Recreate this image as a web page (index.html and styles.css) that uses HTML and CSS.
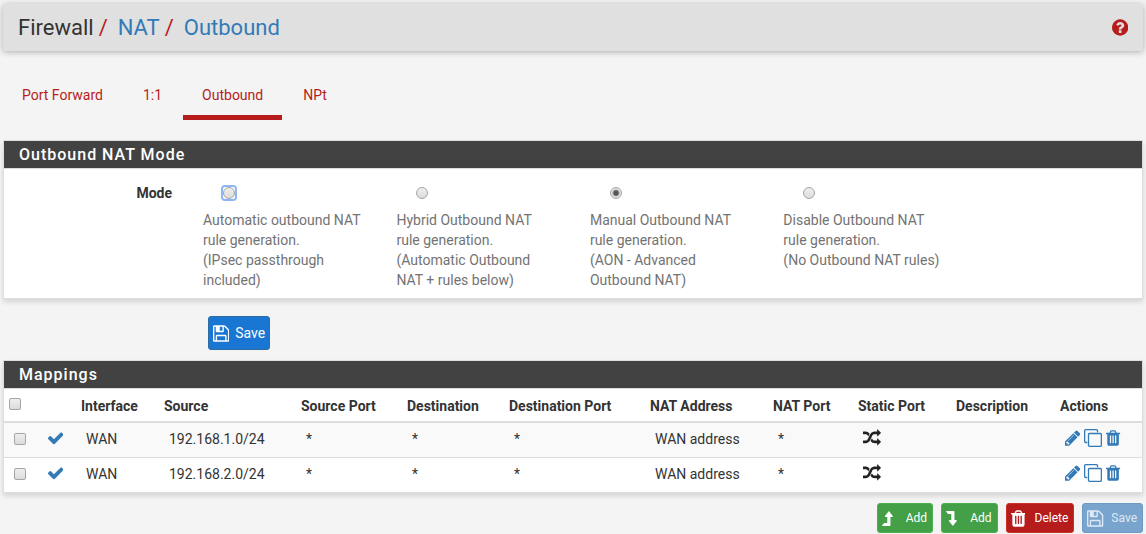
FILE: index.html
```html
<!DOCTYPE html>
<html lang="en">
<head>
  <meta charset="UTF-8" />
  <meta name="viewport" content="width=device-width, initial-scale=1.0" />
  <title>Firewall: NAT: Outbound</title>
  <link rel="stylesheet" href="styles.css">
</head>
<body>
  <svg class="sprite" aria-hidden="true">
    <defs>
      <path id="i-help" d="M1024 1376v-192q0-14-9-23t-23-9h-192q-14 0-23 9t-9 23v192q0 14 9 23t23 9h192q14 0 23-9t9-23zm256-672q0-88-55.5-163t-138.5-116-170-41q-243 0-371 213-15 24 8 42l132 100q7 6 19 6 16 0 25-12 53-68 86-92 34-24 86-24 48 0 85.5 26t37.5 59q0 38-20 61t-68 45q-63 28-115.5 86.5t-52.5 125.5v36q0 14 9 23t23 9h192q14 0 23-9t9-23q0-19 21.5-49.5t54.5-49.5q32-18 49-28.5t46-35 44.5-48 28-60.5 12.5-81zm384 192q0 209-103 385.5t-279.5 279.5-385.5 103-385.5-103-279.5-279.5-103-385.5 103-385.5 279.5-279.5 385.5-103 385.5 103 279.5 279.5 103 385.5z"/>
      <path id="i-check" d="M1671 566q0 40-28 68l-724 724-136 136q-28 28-68 28t-68-28l-136-136-362-362q-28-28-28-68t28-68l136-136q28-28 68-28t68 28l294 295 656-657q28-28 68-28t68 28l136 136q28 28 28 68z"/>
      <path id="i-save" d="M512 1536h768v-384h-768v384zm896 0h128v-896q0-14-10-38.5t-20-34.5l-281-281q-10-10-34-20t-39-10v416q0 40-28 68t-68 28h-576q-40 0-68-28t-28-68v-416h-128v1280h128v-416q0-40 28-68t68-28h832q40 0 68 28t28 68v416zm-384-928v-320q0-13-9.500-22.500t-22.500-9.500h-192q-13 0-22.500 9.500t-9.500 22.500v320q0 13 9.500 22.500t22.500 9.500h192q13 0 22.500-9.500t9.500-22.500zm640 32v928q0 40-28 68t-68 28h-1344q-40 0-68-28t-28-68v-1344q0-40 28-68t68-28h928q40 0 88 20t76 48l280 280q28 28 48 76t20 88z"/>
      <path id="i-trash" d="M704 1376v-704q0-14-9-23t-23-9h-64q-14 0-23 9t-9 23v704q0 14 9 23t23 9h64q14 0 23-9t9-23zm256 0v-704q0-14-9-23t-23-9h-64q-14 0-23 9t-9 23v704q0 14 9 23t23 9h64q14 0 23-9t9-23zm256 0v-704q0-14-9-23t-23-9h-64q-14 0-23 9t-9 23v704q0 14 9 23t23 9h64q14 0 23-9t9-23zm-544-992h448l-48-117q-7-9-17-11h-317q-10 2-17 11zm928 32v64q0 14-9 23t-23 9h-96v948q0 83-47 143.500t-113 60.500h-832q-66 0-113-58.500t-47-141.500v-952h-96q-14 0-23-9t-9-23v-64q0-14 9-23t23-9h309l70-167q15-37 54-63t79-26h320q40 0 79 26t54 63l70 167h309q14 0 23 9t9 23z"/>
      <path id="i-pencil" d="M491 1536l91-91-235-235-91 91v107h128v128h107zm523-928q0-22-22-22-10 0-17 7l-542 542q-7 7-7 17 0 22 22 22 10 0 17-7l542-542q7-7 7-17zm-54-192l416 416-832 832h-416v-416zm683 96q0 53-37 90l-166 166-416-416 166-165q36-38 90-38 53 0 91 38l235 234q37 39 37 91z"/>
      <path id="i-random" d="M666 481q-60 92-137 273-22-45-37-72.500t-40.500-63.500-51-56.500-63-35-81.500-14.500h-224q-14 0-23-9t-9-23v-192q0-14 9-23t23-9h224q250 0 410 225zm1126 799q0 14-9 23l-320 320q-9 9-23 9-13 0-22.500-9.500t-9.500-22.500v-192q-32 0-85 .5t-81 1-73-1-71-5-64-10.500-63-18.500-58-28.500-59-40-55-53.500-56-69.500q59-93 136-273 22 45 37 72.500t40.500 63.500 51 56.500 63 35 81.500 14.500h256v-192q0-14 9-23t23-9q12 0 24 10l319 319q9 9 9 23zm0-896q0 14-9 23l-320 320q-9 9-23 9-13 0-22.500-9.500t-9.500-22.500v-192h-256q-48 0-87 15t-69 45-51 61.500-45 77.500q-32 62-78 171-29 66-49.500 111t-54 105-64 100-74 83-90 68.500-106.500 42-128 16.500h-224q-14 0-23-9t-9-23v-192q0-14 9-23t23-9h224q48 0 87-15t69-45 51-61.500 45-77.500q32-62 78-171 29-66 49.500-111t54-105 64-100 74-83 90-68.500 106.500-42 128-16.500h256v-192q0-14 9-23t23-9q12 0 24 10l319 319q9 9 9 23z"/>
      <path id="i-clone" d="M1664 1632v-1088q0-13-9.500-22.500t-22.500-9.500h-1088q-13 0-22.500 9.500t-9.500 22.500v1088q0 13 9.500 22.500t22.500 9.500h1088q13 0 22.500-9.500t9.500-22.500zm128-1088v1088q0 66-47 113t-113 47h-1088q-66 0-113-47t-47-113v-1088q0-66 47-113t113-47h1088q66 0 113 47t47 113zm-384-384v160h-128v-160q0-13-9.500-22.500t-22.500-9.500h-1088q-13 0-22.500 9.500t-9.500 22.500v1088q0 13 9.500 22.500t22.500 9.500h160v128h-160q-66 0-113-47t-47-113v-1088q0-66 47-113t113-47h1088q66 0 113 47t47 113z"/>
      <path id="i-up" d="M6.500 0L10.200 4.600Q10.400 5.400 9.700 5.500H8V13.500Q8 14 7.500 14H.4Q-.1 13.800.2 13.300L2 11.300H5V5.500H3.300Q2.600 5.400 2.800 4.600Z"/>
      <path id="i-down" d="M6.500 14L10.200 9.400Q10.400 8.600 9.700 8.500H8V.5Q8 0 7.500 0H.4Q-.1.200.2.700L2 2.700H5V8.500H3.300Q2.600 8.600 2.800 9.400Z"/>
    </defs>
  </svg>

  <header class="header">
    <ol class="breadcrumb">
      <li>Firewall</li>
      <li><a href="#">NAT</a></li>
      <li><a href="#">Outbound</a></li>
    </ol>
    <a class="help" href="#" aria-label="Help"><svg class="icon" viewBox="128 0 1536 1792"><use href="#i-help"/></svg></a>
  </header>

  <nav class="tabs">
    <a href="#">Port Forward</a>
    <a href="#">1:1</a>
    <a href="#" class="active">Outbound</a>
    <a href="#">NPt</a>
  </nav>

  <form>
    <section class="panel">
      <h2>Outbound NAT Mode</h2>
      <div class="modes" role="radiogroup" aria-labelledby="modeLabel">
        <span class="modes-label" id="modeLabel">Mode</span>
        <label class="mode">
          <input type="radio" name="mode" value="automatic" autofocus />
          <span>Automatic outbound NAT rule generation.<br>(IPsec passthrough included)</span>
        </label>
        <label class="mode">
          <input type="radio" name="mode" value="hybrid" />
          <span>Hybrid Outbound NAT rule generation.<br>(Automatic Outbound NAT + rules below)</span>
        </label>
        <label class="mode">
          <input type="radio" name="mode" value="advanced" checked />
          <span>Manual Outbound NAT rule generation.<br>(AON - Advanced Outbound NAT)</span>
        </label>
        <label class="mode">
          <input type="radio" name="mode" value="disabled" />
          <span>Disable Outbound NAT rule generation.<br>(No Outbound NAT rules)</span>
        </label>
      </div>
    </section>
    <div class="form-actions">
      <button type="submit" class="btn btn-primary"><svg class="icon" viewBox="128 0 1536 1792"><use href="#i-save"/></svg>Save</button>
    </div>
  </form>

  <form>
    <section class="panel">
      <h2>Mappings</h2>
      <table>
        <colgroup>
          <col class="col-select"><col class="col-status"><col class="col-interface"><col class="col-source">
          <col class="col-sport"><col class="col-dest"><col class="col-dport"><col class="col-address">
          <col class="col-port"><col class="col-static"><col class="col-descr"><col class="col-actions">
        </colgroup>
        <thead>
          <tr>
            <th><input type="checkbox" aria-label="Select all" /></th>
            <th></th>
            <th>Interface</th>
            <th>Source</th>
            <th>Source Port</th>
            <th>Destination</th>
            <th>Destination Port</th>
            <th>NAT Address</th>
            <th>NAT Port</th>
            <th>Static Port</th>
            <th>Description</th>
            <th>Actions</th>
          </tr>
        </thead>
        <tbody>
          <tr>
            <td><input type="checkbox" aria-label="Select 192.168.1.0/24" /></td>
            <td><a href="#" aria-label="Disable"><svg class="icon" viewBox="128 0 1536 1792"><use href="#i-check"/></svg></a></td>
            <td>WAN</td>
            <td>192.168.1.0/24</td>
            <td>*</td>
            <td>*</td>
            <td>*</td>
            <td>WAN address</td>
            <td>*</td>
            <td class="static"><svg class="icon" viewBox="0 0 1792 1792"><use href="#i-random"/></svg></td>
            <td></td>
            <td>
              <div class="row-actions">
                <a href="#" aria-label="Edit"><svg class="icon" viewBox="128 0 1536 1792"><use href="#i-pencil"/></svg></a>
                <a href="#" aria-label="Copy"><svg class="icon" viewBox="0 0 1792 1792"><use href="#i-clone"/></svg></a>
                <a href="#" aria-label="Delete"><svg class="icon" viewBox="192 0 1408 1792"><use href="#i-trash"/></svg></a>
              </div>
            </td>
          </tr>
          <tr>
            <td><input type="checkbox" aria-label="Select 192.168.2.0/24" /></td>
            <td><a href="#" aria-label="Disable"><svg class="icon" viewBox="128 0 1536 1792"><use href="#i-check"/></svg></a></td>
            <td>WAN</td>
            <td>192.168.2.0/24</td>
            <td>*</td>
            <td>*</td>
            <td>*</td>
            <td>WAN address</td>
            <td>*</td>
            <td class="static"><svg class="icon" viewBox="0 0 1792 1792"><use href="#i-random"/></svg></td>
            <td></td>
            <td>
              <div class="row-actions">
                <a href="#" aria-label="Edit"><svg class="icon" viewBox="128 0 1536 1792"><use href="#i-pencil"/></svg></a>
                <a href="#" aria-label="Copy"><svg class="icon" viewBox="0 0 1792 1792"><use href="#i-clone"/></svg></a>
                <a href="#" aria-label="Delete"><svg class="icon" viewBox="192 0 1408 1792"><use href="#i-trash"/></svg></a>
              </div>
            </td>
          </tr>
        </tbody>
      </table>
    </section>
    <div class="list-actions">
      <button type="button" class="btn btn-sm btn-success"><span class="btn-icon"><svg class="icon" viewBox="0 -2 11 18"><use href="#i-up"/></svg></span>Add</button>
      <button type="button" class="btn btn-sm btn-success"><span class="btn-icon"><svg class="icon" viewBox="0 -2 11 18"><use href="#i-down"/></svg></span>Add</button>
      <button type="button" class="btn btn-sm btn-danger"><span class="btn-icon"><svg class="icon" viewBox="192 0 1408 1792"><use href="#i-trash"/></svg></span>Delete</button>
      <button type="submit" class="btn btn-sm btn-primary" disabled><span class="btn-icon"><svg class="icon" viewBox="128 0 1536 1792"><use href="#i-save"/></svg></span>Save</button>
    </div>
  </form>
</body>
</html>
```
FILE: styles.css
```css
*, *::before {
  box-sizing: border-box;
}
body {
  margin: 0;
  padding: 4px 3px 0;
  font-family: Roboto, sans-serif;
  font-size: 14px;
  line-height: 20px;
  color: #333;
  background: #f4f4f4;
}
a {
  color: #337ab7;
  text-decoration: none;
}
.sprite {
  display: none;
}
.icon {
  display: block;
  height: 19px;
  fill: currentColor;
}

/* header */
.header {
  display: flex;
  align-items: center;
  justify-content: space-between;
  padding: 8px 15px;
  background: #e0e0e0;
  border-radius: 2px;
  box-shadow: 0 1px 6px rgba(0, 0, 0, 0.3);
}
.breadcrumb {
  display: flex;
  margin: 0;
  padding: 0;
  list-style: none;
  font-size: 22px;
  line-height: 31px;
}
.breadcrumb li + li::before {
  content: "/";
  padding: 0 10px 0 5px;
  color: #b71c1c;
}
.help {
  color: #b71c1c;
}

/* tabs */
.tabs {
  display: flex;
  gap: 2px;
  margin: 24px 0 20px;
}
.tabs a {
  padding: 10px 19px;
  color: #b71c1c;
  border-bottom: 5px solid transparent;
}
.tabs .active {
  border-bottom-color: #b71c1c;
}

/* panels */
.panel {
  background: #fff;
  border: 1px solid #ddd;
  box-shadow: 0 3px 5px rgba(0, 0, 0, 0.13);
}
.panel h2 {
  margin: 0;
  padding: 4px 15px 3px;
  font-size: 16px;
  font-weight: 500;
  letter-spacing: 1px;
  color: #fff;
  background: #424242;
  border-bottom: 1px solid #ddd;
}
.modes {
  display: grid;
  grid-template-columns: 168px repeat(4, 17%);
  padding: 14px 0 8px;
}
.modes-label {
  text-align: right;
  font-weight: bold;
}
.mode {
  padding: 0 3px 0 31px;
  color: #737373;
}
.mode input {
  margin: 4px 20px 11px;
}
.form-actions {
  padding: 17px 205px 10px;
}

/* inputs */
input {
  display: block;
  appearance: none;
  width: 12px;
  height: 12px;
  margin: 4px 0;
  border-radius: 2px;
}
input::before {
  content: "";
  display: block;
  width: 12px;
  height: 12px;
  border: 1px solid #a5a5a5;
  border-radius: 2px;
  background: linear-gradient(#eee, #dcdcdc);
}
input[type="radio"]::before {
  border-radius: 50%;
}
input[type="radio"]:checked::before {
  background: radial-gradient(circle, #555 2px, #e4e4e4 4px);
}
input:focus {
  outline: 2px solid #8fb5f5;
  outline-offset: 0;
}

/* buttons */
.btn {
  display: flex;
  align-items: center;
  gap: 6px;
  height: 34px;
  padding: 0 4px;
  font-family: inherit;
  font-size: 14px;
  color: #fff;
  border: 1px solid;
  border-radius: 3px;
}
.btn-sm {
  gap: 0;
  height: 30px;
  padding-right: 5px;
  font-size: 12px;
}
.btn-icon {
  width: 24px;
}
.btn-primary {
  background: #1976d2;
  border-color: #2e6da4;
}
.btn-success {
  background: #43a047;
  border-color: #4cae4c;
}
.btn-danger {
  background: #b71c1c;
  border-color: #c9302c;
}
.btn:disabled {
  background: #79a4cd;
  border-color: #6d9ac5;
  color: #dfe9f3;
}
.list-actions {
  display: flex;
  justify-content: flex-end;
  gap: 8px;
  margin-top: 10px;
}

/* mappings */
table {
  width: 100%;
  table-layout: fixed;
  border-collapse: collapse;
}
th {
  padding: 7px 5px 5px;
  text-align: left;
  vertical-align: top;
  border-bottom: 2px solid #ddd;
}
th input {
  margin: 2px 0;
}
td {
  padding: 6px 10px 8px;
  vertical-align: top;
}
td .icon {
  height: 18px;
}
tr + tr td {
  border-top: 1px solid #ddd;
}
tbody tr:first-child {
  background: #f9f9f9;
}
.static {
  color: #212121;
}
.row-actions {
  display: flex;
  gap: 4px;
}
.col-select { width: 34px; }
.col-status { width: 38px; }
.col-interface { width: 83px; }
.col-source { width: 137px; }
.col-sport { width: 106px; }
.col-dest { width: 102px; }
.col-dport { width: 141px; }
.col-address { width: 123px; }
.col-port { width: 85px; }
.col-static { width: 98px; }
.col-descr { width: 104px; }
.col-actions { width: 87px; }
```
